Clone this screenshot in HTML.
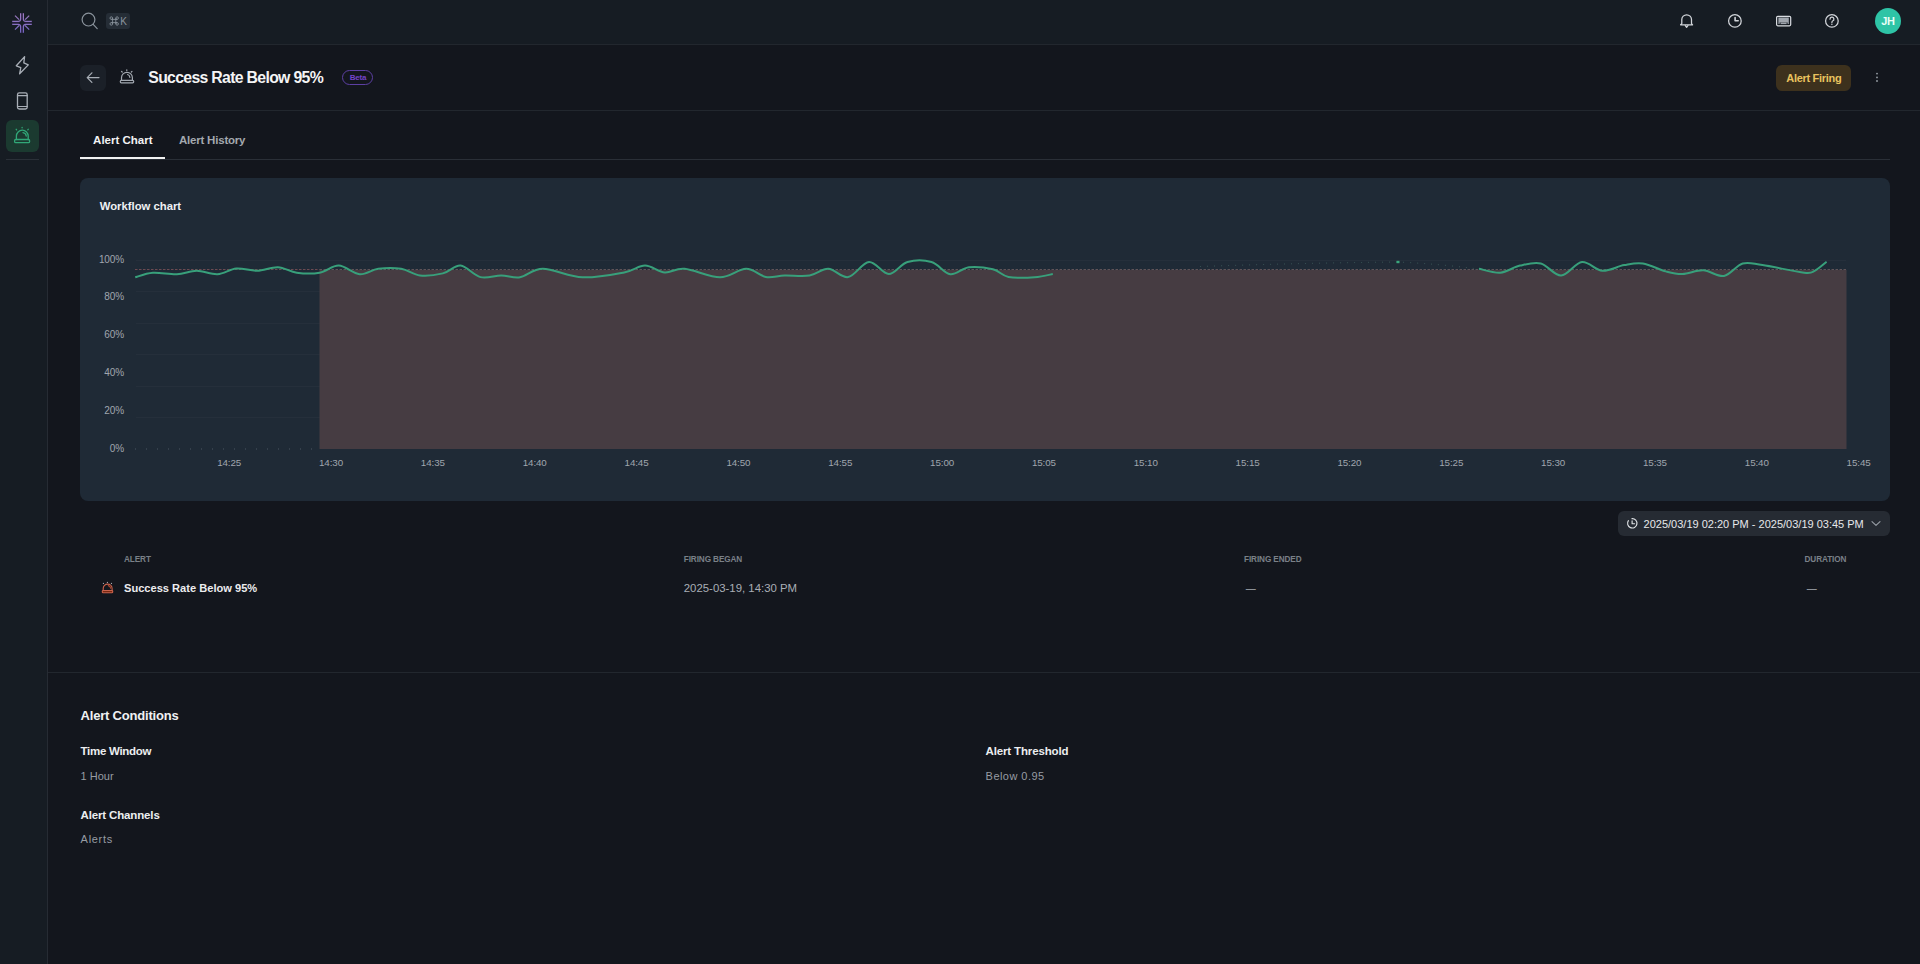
<!DOCTYPE html>
<html><head><meta charset="utf-8"><style>
*{margin:0;padding:0;box-sizing:border-box}
html,body{width:1920px;height:964px;overflow:hidden;background:#13161d;font-family:"Liberation Sans",sans-serif}
.t{position:absolute;white-space:nowrap;line-height:1}
.abs{position:absolute}
</style></head><body>
<div class="abs" style="left:0;top:0;width:47px;height:964px;background:#161c23"></div>
<div class="abs" style="left:47px;top:0;width:1px;height:964px;background:#262b33"></div>
<div class="abs" style="left:48px;top:0;width:1872px;height:44px;background:#161c23"></div>
<div class="abs" style="left:48px;top:44px;width:1872px;height:1px;background:#22272e"></div>
<div class="abs" style="left:48px;top:110px;width:1872px;height:1px;background:#22272e"></div>
<div class="abs" style="left:80px;top:159px;width:1810px;height:1px;background:#2a2f37"></div>
<div class="abs" style="left:80px;top:157px;width:85px;height:2px;background:#f2f2f2"></div>
<div class="abs" style="left:80px;top:178px;width:1810px;height:323px;background:#1f2a36;border-radius:8px"></div>
<div class="abs" style="left:48px;top:672px;width:1872px;height:1px;background:#22272e"></div>
<svg class="abs" style="left:0;top:0" width="1920" height="964" viewBox="0 0 1920 964">
<line x1="136" x2="1846" y1="260.5" y2="260.5" stroke="#252f3b" stroke-width="1"/>
<line x1="136" x2="1846" y1="291.5" y2="291.5" stroke="#252f3b" stroke-width="1"/>
<line x1="136" x2="1846" y1="323.5" y2="323.5" stroke="#252f3b" stroke-width="1"/>
<line x1="136" x2="1846" y1="354.5" y2="354.5" stroke="#252f3b" stroke-width="1"/>
<line x1="136" x2="1846" y1="386.5" y2="386.5" stroke="#252f3b" stroke-width="1"/>
<line x1="136" x2="1846" y1="417.5" y2="417.5" stroke="#252f3b" stroke-width="1"/>
<rect x="319.5" y="270" width="1527" height="179" fill="#463c42"/>
<line x1="135" x2="319.5" y1="269.5" y2="269.5" stroke="#6c4a52" stroke-width="1" stroke-dasharray="2.5 1.5"/>
<line x1="319.5" x2="1846" y1="269.5" y2="269.5" stroke="#5f5358" stroke-width="1" stroke-dasharray="2.5 1.5"/>
<line x1="135" x2="319" y1="449" y2="449" stroke="#4c5662" stroke-width="1" stroke-dasharray="1 10"/>
<path d="M1200,266.5 Q1300,263 1398,262 Q1440,264 1478,269" fill="none" stroke="#3d5a5a" stroke-width="1" stroke-dasharray="1 6"/>
<rect x="1396.5" y="260.8" width="3" height="2.4" fill="#3aa77d"/>
<path d="M135.2,277.3 C138.1,276.5 145.9,273.2 152.9,272.7 C159.9,272.2 169.6,274.5 176.9,274.2 C184.2,273.9 189.9,270.8 196.7,270.8 C203.5,270.8 210.9,274.6 217.5,274.2 C224.1,273.8 229.7,269.1 236.3,268.5 C242.9,267.9 250.2,271.0 257.1,270.8 C264.0,270.6 271.3,266.9 277.9,267.2 C284.5,267.5 289.8,271.8 296.7,272.7 C303.6,273.6 312.6,273.9 319.6,272.7 C326.6,271.5 332.1,265.4 338.8,265.6 C345.4,265.9 353.0,273.7 359.6,274.2 C366.2,274.7 371.4,269.7 378.3,268.8 C385.2,267.8 394.3,267.6 401.2,268.8 C408.2,269.9 413.1,274.7 420.0,275.5 C426.9,276.3 436.1,275.0 442.9,273.4 C449.7,271.8 454.4,265.0 460.6,265.6 C466.9,266.2 473.6,275.5 480.4,277.1 C487.2,278.8 494.6,275.5 501.2,275.5 C507.9,275.5 513.1,278.4 520.0,277.3 C526.9,276.2 532.5,268.8 542.9,268.8 C553.3,268.8 569.0,276.7 582.5,277.3 C596.0,277.9 613.8,274.3 624.2,272.4 C634.6,270.4 638.2,265.6 645.0,265.6 C651.8,265.6 658.2,271.9 664.8,272.4 C671.4,272.9 675.4,267.9 684.6,268.8 C693.8,269.6 709.8,277.3 720.0,277.3 C730.2,277.3 738.4,268.8 746.0,268.8 C753.6,268.7 759.4,275.8 765.8,276.9 C772.2,278.0 777.3,275.7 784.6,275.5 C791.9,275.3 802.3,276.6 809.6,275.5 C816.9,274.4 821.9,268.5 828.3,268.8 C834.7,269.0 841.3,278.2 848.1,277.1 C854.9,276.0 862.2,262.5 869.0,262.0 C875.8,261.5 882.3,274.0 888.8,274.0 C895.2,274.0 900.4,264.0 907.5,262.0 C914.6,260.0 924.4,260.0 931.5,262.0 C938.6,264.0 944.0,273.3 950.2,274.2 C956.5,275.1 961.9,268.0 969.0,267.2 C976.1,266.4 986.3,267.7 992.9,269.3 C999.5,270.9 1001.5,275.6 1008.5,276.9 C1015.5,278.2 1027.2,277.8 1034.6,277.3 C1042.0,276.8 1049.8,274.6 1052.8,274.0" fill="none" stroke="#38a07b" stroke-width="2"/>
<path d="M1478.9,268.8 C1482.5,269.4 1493.4,273.2 1500.2,272.7 C1507.0,272.2 1513.2,267.1 1520.0,265.6 C1526.8,264.1 1534.0,261.9 1540.8,263.5 C1547.6,265.1 1554.2,275.8 1561.1,275.5 C1568.0,275.2 1575.1,262.8 1582.0,262.0 C1588.9,261.2 1595.3,270.3 1602.3,270.8 C1609.3,271.3 1617.4,266.3 1624.2,265.1 C1631.0,263.9 1636.0,262.4 1642.9,263.5 C1649.8,264.6 1659.2,269.6 1665.8,271.4 C1672.4,273.1 1676.2,274.2 1682.5,274.0 C1688.8,273.8 1696.4,270.0 1703.3,270.3 C1710.2,270.6 1717.4,277.1 1724.0,276.0 C1730.6,274.9 1736.3,265.3 1742.7,263.5 C1749.1,261.7 1752.2,263.6 1762.5,265.1 C1772.8,266.6 1795.5,271.8 1804.2,272.7 C1812.9,273.6 1810.9,272.6 1814.6,270.8 C1818.3,269.0 1824.6,263.2 1826.6,261.7" fill="none" stroke="#38a07b" stroke-width="2"/>
</svg>
<div class="t" style="left:148.30px;top:69.93px;font-size:15.8px;font-weight:700;color:#f4f4f5;letter-spacing:-0.68px;">Success Rate Below 95%</div>
<div class="t" style="left:93.10px;top:135.27px;font-size:11.5px;font-weight:700;color:#f2f2f3;">Alert Chart</div>
<div class="t" style="left:178.90px;top:135.27px;font-size:11.5px;font-weight:700;color:#a3a8ae;letter-spacing:-0.2px;">Alert History</div>
<div class="t" style="left:99.70px;top:201.43px;font-size:11.3px;font-weight:700;color:#eef0f2;">Workflow chart</div>
<div class="t" style="right:1796.10px;top:254.53px;font-size:10px;font-weight:400;color:#a0a6ae;letter-spacing:-0.15px;">100%</div>
<div class="t" style="right:1796.10px;top:292.34px;font-size:10px;font-weight:400;color:#a0a6ae;letter-spacing:-0.15px;">80%</div>
<div class="t" style="right:1796.10px;top:330.14px;font-size:10px;font-weight:400;color:#a0a6ae;letter-spacing:-0.15px;">60%</div>
<div class="t" style="right:1796.10px;top:367.94px;font-size:10px;font-weight:400;color:#a0a6ae;letter-spacing:-0.15px;">40%</div>
<div class="t" style="right:1796.10px;top:405.74px;font-size:10px;font-weight:400;color:#a0a6ae;letter-spacing:-0.15px;">20%</div>
<div class="t" style="right:1796.10px;top:443.54px;font-size:10px;font-weight:400;color:#a0a6ae;letter-spacing:-0.15px;">0%</div>
<div class="t" style="left:29.20px;width:400px;text-align:center;top:458.00px;font-size:9.8px;font-weight:400;color:#a0a6ae;letter-spacing:-0.1px;">14:25</div>
<div class="t" style="left:131.04px;width:400px;text-align:center;top:458.00px;font-size:9.8px;font-weight:400;color:#a0a6ae;letter-spacing:-0.1px;">14:30</div>
<div class="t" style="left:232.88px;width:400px;text-align:center;top:458.00px;font-size:9.8px;font-weight:400;color:#a0a6ae;letter-spacing:-0.1px;">14:35</div>
<div class="t" style="left:334.72px;width:400px;text-align:center;top:458.00px;font-size:9.8px;font-weight:400;color:#a0a6ae;letter-spacing:-0.1px;">14:40</div>
<div class="t" style="left:436.56px;width:400px;text-align:center;top:458.00px;font-size:9.8px;font-weight:400;color:#a0a6ae;letter-spacing:-0.1px;">14:45</div>
<div class="t" style="left:538.40px;width:400px;text-align:center;top:458.00px;font-size:9.8px;font-weight:400;color:#a0a6ae;letter-spacing:-0.1px;">14:50</div>
<div class="t" style="left:640.24px;width:400px;text-align:center;top:458.00px;font-size:9.8px;font-weight:400;color:#a0a6ae;letter-spacing:-0.1px;">14:55</div>
<div class="t" style="left:742.08px;width:400px;text-align:center;top:458.00px;font-size:9.8px;font-weight:400;color:#a0a6ae;letter-spacing:-0.1px;">15:00</div>
<div class="t" style="left:843.92px;width:400px;text-align:center;top:458.00px;font-size:9.8px;font-weight:400;color:#a0a6ae;letter-spacing:-0.1px;">15:05</div>
<div class="t" style="left:945.76px;width:400px;text-align:center;top:458.00px;font-size:9.8px;font-weight:400;color:#a0a6ae;letter-spacing:-0.1px;">15:10</div>
<div class="t" style="left:1047.60px;width:400px;text-align:center;top:458.00px;font-size:9.8px;font-weight:400;color:#a0a6ae;letter-spacing:-0.1px;">15:15</div>
<div class="t" style="left:1149.44px;width:400px;text-align:center;top:458.00px;font-size:9.8px;font-weight:400;color:#a0a6ae;letter-spacing:-0.1px;">15:20</div>
<div class="t" style="left:1251.28px;width:400px;text-align:center;top:458.00px;font-size:9.8px;font-weight:400;color:#a0a6ae;letter-spacing:-0.1px;">15:25</div>
<div class="t" style="left:1353.12px;width:400px;text-align:center;top:458.00px;font-size:9.8px;font-weight:400;color:#a0a6ae;letter-spacing:-0.1px;">15:30</div>
<div class="t" style="left:1454.96px;width:400px;text-align:center;top:458.00px;font-size:9.8px;font-weight:400;color:#a0a6ae;letter-spacing:-0.1px;">15:35</div>
<div class="t" style="left:1556.80px;width:400px;text-align:center;top:458.00px;font-size:9.8px;font-weight:400;color:#a0a6ae;letter-spacing:-0.1px;">15:40</div>
<div class="t" style="left:1658.64px;width:400px;text-align:center;top:458.00px;font-size:9.8px;font-weight:400;color:#a0a6ae;letter-spacing:-0.1px;">15:45</div>
<div class="t" style="left:124.00px;top:555.56px;font-size:8.2px;font-weight:700;color:#7a8088;letter-spacing:-0.1px;">ALERT</div>
<div class="t" style="left:683.75px;top:555.56px;font-size:8.2px;font-weight:700;color:#7a8088;letter-spacing:-0.1px;">FIRING BEGAN</div>
<div class="t" style="left:1244.00px;top:555.56px;font-size:8.2px;font-weight:700;color:#7a8088;letter-spacing:-0.1px;">FIRING ENDED</div>
<div class="t" style="left:1804.50px;top:555.56px;font-size:8.2px;font-weight:700;color:#7a8088;letter-spacing:-0.1px;">DURATION</div>
<div class="t" style="left:124.00px;top:582.60px;font-size:11.1px;font-weight:700;color:#ececee;">Success Rate Below 95%</div>
<div class="t" style="left:683.75px;top:582.85px;font-size:11.4px;font-weight:400;color:#a9aeb5;">2025-03-19, 14:30 PM</div>
<div class="t" style="left:1245.70px;top:584.03px;font-size:10px;font-weight:400;color:#a9aeb5;">&mdash;</div>
<div class="t" style="left:1806.70px;top:584.03px;font-size:10px;font-weight:400;color:#a9aeb5;">&mdash;</div>
<div class="abs" style="left:1618px;top:511px;width:272px;height:25px;background:#262b33;border-radius:6px"></div>
<div class="t" style="left:1643.60px;top:519.39px;font-size:11px;font-weight:400;color:#e6e8eb;">2025/03/19 02:20 PM - 2025/03/19 03:45 PM</div>
<div class="abs" style="left:1776px;top:65px;width:75px;height:26px;background:#3d311d;border-radius:6px"></div>
<div class="t" style="left:1786.30px;top:72.69px;font-size:11px;font-weight:700;color:#e9c35f;letter-spacing:-0.3px;">Alert Firing</div>
<div class="abs" style="left:342px;top:70px;width:31px;height:15px;border:1px solid #5c3fa3;border-radius:8px"></div>
<div class="t" style="left:349.80px;top:73.83px;font-size:8px;font-weight:700;color:#7444c8;letter-spacing:-0.25px;">Beta</div>
<div class="abs" style="left:80px;top:65px;width:26px;height:26px;background:#1b2028;border-radius:6px"></div>
<div class="abs" style="left:106px;top:13px;width:24px;height:16px;background:#252d36;border-radius:3px"></div>
<div class="t" style="left:120.20px;top:16.54px;font-size:10px;font-weight:400;color:#8a949d;">K</div>
<svg class="abs" style="left:0;top:0" width="140" height="40" viewBox="0 0 140 40" fill="none" stroke="#8a949d" stroke-width="0.85"><path d="M111.3,19.4 H117.1 M111.3,22.6 H117.1 M112.6,18.1 V23.9 M115.8,18.1 V23.9"/><circle cx="111.3" cy="18.1" r="1.3"/><circle cx="117.1" cy="18.1" r="1.3"/><circle cx="111.3" cy="23.9" r="1.3"/><circle cx="117.1" cy="23.9" r="1.3"/></svg>
<div class="abs" style="left:1875px;top:8px;width:26px;height:26px;background:#2ec4a6;border-radius:50%"></div>
<div class="t" style="left:1688.00px;width:400px;text-align:center;top:15.69px;font-size:11px;font-weight:700;color:#e8fff8;letter-spacing:-0.2px;">JH</div>
<div class="abs" style="left:6px;top:120px;width:33px;height:32px;background:#1b3a30;border-radius:6px"></div>
<div class="abs" style="left:6px;top:159px;width:33px;height:1px;background:#2a3038"></div>
<div class="t" style="left:80.60px;top:708.80px;font-size:13px;font-weight:700;color:#f0f1f3;letter-spacing:-0.2px;">Alert Conditions</div>
<div class="t" style="left:80.60px;top:746.47px;font-size:11.5px;font-weight:700;color:#eceef0;letter-spacing:-0.3px;">Time Window</div>
<div class="t" style="left:80.60px;top:770.89px;font-size:11px;font-weight:400;color:#979ca3;">1 Hour</div>
<div class="t" style="left:80.60px;top:810.27px;font-size:11.5px;font-weight:700;color:#eceef0;letter-spacing:-0.15px;">Alert Channels</div>
<div class="t" style="left:80.60px;top:834.29px;font-size:11px;font-weight:400;color:#979ca3;letter-spacing:0.7px;">Alerts</div>
<div class="t" style="left:985.60px;top:746.47px;font-size:11.5px;font-weight:700;color:#eceef0;letter-spacing:-0.15px;">Alert Threshold</div>
<div class="t" style="left:985.60px;top:770.89px;font-size:11px;font-weight:400;color:#979ca3;letter-spacing:0.45px;">Below 0.95</div>
<svg class="abs" style="left:0;top:0" width="1920" height="964" viewBox="0 0 1920 964" fill="none" stroke-linecap="round" stroke-linejoin="round">
<defs><linearGradient id="lg" x1="0" y1="13" x2="0" y2="33" gradientUnits="userSpaceOnUse"><stop offset="0" stop-color="#a07cc0"/><stop offset="1" stop-color="#7266c0"/></linearGradient></defs>
<g stroke="#2a1d44" stroke-width="1.4"><path d="M22,13.5 V20 M22,26 V32.5 M12.5,22.9 H19 M25,22.9 H31.5"/></g>
<g stroke="url(#lg)" stroke-width="1.2" stroke-linecap="butt">
<path d="M20.6,13.2 V19 Q20.6,21.45 18.2,21.45 H12.2"/>
<path d="M23.4,13.2 V19 Q23.4,21.45 25.8,21.45 H31.8"/>
<path d="M12.2,24.4 H18.2 Q20.6,24.4 20.6,26.8 V32.7"/>
<path d="M31.8,24.4 H25.8 Q23.4,24.4 23.4,26.8 V32.7"/>
<path d="M15,15.6 L19.1,19.7"/><path d="M29.2,15.6 L25.1,19.7"/>
<path d="M15,29.6 L19.1,25.5"/><path d="M29.2,29.6 L25.1,25.5"/>
</g>
<path d="M24.6,56.6 L16.3,65.8 L20.8,67.6 L19.6,73.8 L28.3,64.9 L23.8,62.8 Z" stroke="#a9afb7" stroke-width="1.3"/>
<rect x="17.5" y="92.9" width="9.7" height="16.1" rx="1.8" stroke="#a9afb7" stroke-width="1.3"/>
<path d="M17.5,95.6 H27.2 M17.5,106.5 H27.2" stroke="#a9afb7" stroke-width="1.2"/>
<g stroke="#31a878" stroke-width="1.3">
<path d="M16.4,139.5 V136.1 A5.9,5.9 0 0 1 28.2,136.1 V139.5"/>
<path d="M23,132.7 A3.8,3.8 0 0 1 26.2,136"/>
<rect x="14.6" y="139.5" width="15" height="3.1" rx="1.2"/>
<path d="M16.2,129.3 L16.6,129.8 M22.1,127.3 V127.8 M28.2,129.3 L27.8,129.8"/>
</g>
<!-- search -->
<circle cx="88.5" cy="19.6" r="6.4" stroke="#8a939c" stroke-width="1.2"/>
<path d="M93.2,24.3 L97.2,28.6" stroke="#8a939c" stroke-width="1.2"/>
<!-- back arrow -->
<path d="M99,77.6 H87.3 M91.9,72.8 L87.2,77.6 L91.9,82.4" stroke="#a9afb7" stroke-width="1.2"/>
<!-- title siren -->
<g stroke="#a3a9b1" stroke-width="1.2">
<path d="M121.5,80.4 V77.8 A5.45,5.45 0 0 1 132.4,77.8 V80.4"/>
<path d="M127.6,74.5 A3.5,3.5 0 0 1 129.9,77.3"/>
<rect x="120.3" y="80.4" width="13.4" height="2.4" rx="1"/>
<path d="M121.5,71.3 L122.2,72 M126.8,69.8 V70.6 M132,71.3 L131.3,72"/>
</g>
<!-- bell -->
<g stroke="#d2d5da" stroke-width="1.25">
<path d="M1681.8,23.6 V19.6 A4.85,4.85 0 0 1 1691.5,19.6 V23.6 L1692.6,24.8 H1680.6 Z"/>
<path d="M1685.3,25.6 L1686.6,27.3 L1687.9,25.6"/>
</g>
<!-- clock -->
<circle cx="1734.9" cy="20.9" r="6.3" stroke="#d2d5da" stroke-width="1.25"/>
<path d="M1735.1,17.5 V20.8 H1738.2" stroke="#d2d5da" stroke-width="1.6"/>
<!-- keyboard -->
<rect x="1776.6" y="16.3" width="14.1" height="9.5" rx="1.2" stroke="#d8dbe0" stroke-width="1.2"/>
<path d="M1778.4,17.6 H1788.8 V24.1 H1787.6 V22.4 H1779.6 V24.1 H1778.4 Z" fill="#a0a6ae" stroke="none"/>
<path d="M1780.6,22.6 H1786.6 V24.1 H1780.6 Z" fill="#a0a6ae" stroke="none"/>
<!-- help -->
<circle cx="1831.9" cy="20.9" r="6.3" stroke="#d2d5da" stroke-width="1.25"/>
<path d="M1830,19.2 A1.95,1.95 0 1 1 1832.6,21 Q1831.9,21.3 1831.9,22.4" stroke="#d2d5da" stroke-width="1.25"/>
<circle cx="1831.9" cy="24.3" r="0.75" fill="#d2d5da" stroke="none"/>
<!-- kebab -->
<g fill="#9aa0a8" stroke="none"><circle cx="1877" cy="73.6" r="0.9"/><circle cx="1877" cy="77.4" r="0.9"/><circle cx="1877" cy="81" r="0.9"/></g>
<!-- date button timer -->
<g stroke="#e0e3e6" stroke-width="1.15">
<path d="M1632,518.6 A4.7,4.7 0 1 1 1628.4,520.6"/>
<path d="M1632.1,520.8 V523.7 H1634.6"/>
</g>
<!-- chevron -->
<path d="M1872,521.6 L1876,525.4 L1880,521.6" stroke="#9aa0a8" stroke-width="1.1"/>
<!-- table row siren -->
<g stroke="#c9624c" stroke-width="1.1">
<path d="M103.2,590.4 V588.6 A4.45,4.45 0 0 1 112.1,588.6 V590.4"/>
<path d="M108.3,585.6 A3,3 0 0 1 110.6,588.3" stroke="#b24a30"/>
<rect x="102.3" y="590.5" width="10.4" height="2.3" rx="0.8" fill="#7a2810"/>
</g>
<g fill="#a9a9b2"><circle cx="103.4" cy="583.4" r="0.6"/><circle cx="107.4" cy="582.4" r="0.6"/><circle cx="111.5" cy="583.4" r="0.6"/></g>
</svg>
</body></html>
